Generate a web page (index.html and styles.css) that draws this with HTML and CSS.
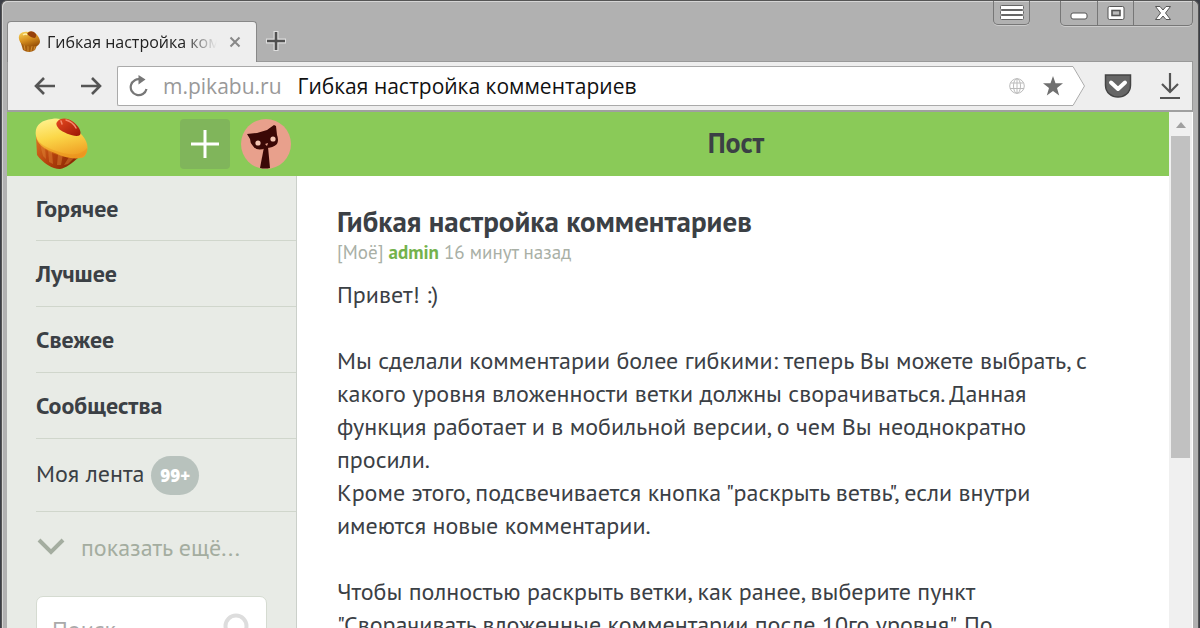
FILE: index.html
```
<!DOCTYPE html>
<html lang="ru">
<head>
<meta charset="utf-8">
<meta name="viewport" content="width=device-width, initial-scale=1">
<title>Гибкая настройка комментариев</title>
<link rel="stylesheet" href="styles.css">
</head>
<body>
<svg class="defs" aria-hidden="true">
  <defs>
    <linearGradient id="cake" x1="0.3" y1="0" x2="0.6" y2="1"><stop offset="0" stop-color="#fff08a"/><stop offset="0.45" stop-color="#fbd748"/><stop offset="1" stop-color="#ef9d22"/></linearGradient>
    <linearGradient id="cup" x1="0" y1="0" x2="1" y2="0.5"><stop offset="0" stop-color="#dd7420"/><stop offset="0.5" stop-color="#b8440e"/><stop offset="1" stop-color="#8e2b05"/></linearGradient>
    <linearGradient id="jam" x1="0" y1="0" x2="1" y2="1"><stop offset="0" stop-color="#e84a20"/><stop offset="1" stop-color="#9c1606"/></linearGradient>
    <linearGradient id="crust" x1="0.2" y1="0" x2="0.7" y2="1"><stop offset="0" stop-color="#f5cf55"/><stop offset="0.5" stop-color="#d99220"/><stop offset="1" stop-color="#9a5206"/></linearGradient>
  </defs>
</svg>
<div class="window">
  <div class="chrome">
    <div class="tabs">
      <div class="tab">
        <svg class="favicon" width="24" height="24" viewBox="0 0 24 24" aria-hidden="true">
          <path d="M2 10L5 20Q11 24 17 20L20 13Z" fill="#a65d0d"/>
          <path d="M6 14l1 6M10 15v7M14 16l-1 5M17 16l-1 4" stroke="#d09030" stroke-width="1"/>
          <path d="M1 9C0 4 4 1 10 2C15 0 21 5 22 11C22 15 19 17 15 16C9 17 2 15 1 9Z" fill="url(#crust)"/>
          <path d="M9 4Q11 0 16 2Q20 5 17 8Q13 8 9 4Z" fill="#97410b"/>
          <path d="M5 5q3-2 4 0" fill="none" stroke="#fff0a8" stroke-width="1.5"/>
        </svg>
        <span class="tab-title">Гибкая настройка комментариев</span>
        <button class="plain" aria-label="Закрыть вкладку"><svg width="12" height="12" viewBox="0 0 12 12"><path d="M1.5 1.5l9 9M10.500 1.500l-9 9" stroke="#888" stroke-width="2"/></svg></button>
      </div>
      <button class="plain new-tab" aria-label="Новая вкладка"><svg width="20" height="20" viewBox="0 0 20 20"><path d="M10 0v20M0 10h20" stroke="#ddd" stroke-width="5"/><path d="M10 1v18M1 10h18" stroke="#505050" stroke-width="2.600"/></svg></button>
      <div class="window-buttons">
        <button class="win menu" aria-label="Меню"><svg width="24" height="15" viewBox="0 0 24 15"><g fill="#fff" stroke="#666"><rect x=".5" y=".5" width="23" height="4" rx="1"/><rect x=".5" y="5.500" width="23" height="4" rx="1"/><rect x=".5" y="10.500" width="23" height="4" rx="1"/></g></svg></button>
        <div class="win-group">
          <button class="win" aria-label="Свернуть"><svg width="18" height="16" viewBox="0 0 18 16"><rect x="1" y="8" width="16" height="6" rx="2" fill="#fff" stroke="#555"/></svg></button>
          <button class="win" aria-label="Развернуть"><svg width="18" height="16" viewBox="0 0 18 16"><rect x="1" y="1.500" width="16" height="13" rx="1.500" fill="#fff" stroke="#555"/><rect x="5" y="5.500" width="8" height="5" fill="#bbb" stroke="#555" stroke-width="1.600"/></svg></button>
          <button class="win wide" aria-label="Закрыть"><svg width="18" height="16" viewBox="0 0 18 16"><path d="M1.500 1.500H6L9 5l3-3.500h4.500L11.500 8l5 6.500H12L9 11l-3 3.500H1.500l5-6.500z" fill="#fff" stroke="#555"/></svg></button>
        </div>
      </div>
    </div>
    <div class="toolbar">
      <button class="plain nav" aria-label="Назад"><svg width="22" height="20" viewBox="0 0 22 20"><path d="M21 10H2M10 2L2 10l8 8" fill="none" stroke="#555" stroke-width="2.600"/></svg></button>
      <button class="plain nav" aria-label="Вперёд"><svg width="22" height="20" viewBox="0 0 22 20"><path d="M1 10h19M12 2l8 8-8 8" fill="none" stroke="#555" stroke-width="2.600"/></svg></button>
      <div class="address">
        <svg class="address-shape" aria-hidden="true" width="12" height="40" viewBox="0 0 12 40"><path d="M0 0L12 20L0 40Z" fill="#fff"/><path d="M0 .5L11.500 20L0 39.500" fill="none" stroke="#aaa"/></svg>
        <button class="plain" aria-label="Обновить"><svg width="20" height="22" viewBox="0 0 20 22"><path d="M12 4.500A8 8 0 1 0 17.500 14" fill="none" stroke="#777" stroke-width="2.200"/><path d="M9.500 0l7 4.500-7 5z" fill="#777"/></svg></button>
        <span class="host">m.pikabu.ru</span>
        <span class="page-title">Гибкая настройка комментариев</span>
        <svg width="16" height="16" viewBox="0 0 16 16" aria-hidden="true"><g fill="none" stroke="#bbb"><circle cx="8" cy="8" r="7.300"/><ellipse cx="8" cy="8" rx="3.500" ry="7.300"/><path d="M8 1v14M1.500 5h13M1 10.500h14"/></g></svg>
        <button class="plain star" aria-label="В закладки"><svg width="20" height="20" viewBox="0 0 20 20"><path d="M10 0l2.500 7.300H20l-6 4.700 2.200 7.500L10 15l-6.200 4.500L6 12 0 7.300h7.500z" fill="#707070"/></svg></button>
      </div>
      <button class="plain pocket" aria-label="Pocket"><svg width="28" height="24" viewBox="0 0 28 24"><path d="M1.500 1h25v10c0 16-25 16-25 0z" fill="#666" stroke="#444" stroke-width="1.500"/><path d="M7 8.500l7 6.500 7-6.500" fill="none" stroke="#fff" stroke-width="4" stroke-linecap="round" stroke-linejoin="round"/></svg></button>
      <button class="plain" aria-label="Загрузки"><svg width="20" height="26" viewBox="0 0 20 26"><path d="M10 0v19M2 11l8 8 8-8M0 25h20" fill="none" stroke="#555" stroke-width="2.200"/></svg></button>
    </div>
  </div>
  <div class="viewport">
    <div class="page">
      <header class="header">
        <div class="header-side">
          <a class="logo" href="#" aria-label="Главная"><svg width="54" height="52" viewBox="0 0 54 52">
            <path d="M1 18L2 37C8 45 17 51 25 51C31 50 37 45 43 40L42 34Z" fill="url(#cup)"/>
            <path d="M5 26l3 12 3 3-1-12zM13 31l1 13 4 2-1-12zM23 36l-1 11h4l2-11zM34 39l-5 8 4-1 6-6z" fill="#e28a38" opacity=".45"/>
            <path d="M1 18C-1 8 6 2 17 1C30-2 39 9 47 17C54 25 54 33 49 39C42 42 30 40 20 35C9 31 2 26 1 18Z" fill="url(#cake)"/>
            <path d="M1 19C4 27 14 31 28 35C39 38 47 36 52 30C53 36 47 41 38 40C22 39 3 31 1 19Z" fill="#e88b1b" opacity=".4"/>
            <path d="M22 4C25-1 33 0 37 3C43 7 47 13 45 17C41 20 29 15 24 11Q20 7 22 4Z" fill="url(#jam)"/>
            <path d="M26 3l1 3M31 2q7 2 10 8" stroke="#f58b6c" stroke-width="1.500" fill="none" stroke-linecap="round"/>
          </svg></a>
          <button class="add" aria-label="Добавить пост"><svg width="30" height="30" viewBox="0 0 30 30"><path d="M15 1v28M1 15h28" stroke="#fff" stroke-width="3"/></svg></button>
          <a class="avatar" href="#" aria-label="Профиль"><svg width="50" height="50" viewBox="0 0 50 50">
            <circle cx="25" cy="25" r="25" fill="#e8a08c"/>
            <path d="M6 15L16 14L26 11L33 6L35 7L36 16Q38 21 36 25Q32 29 25 29Q16 33 12 27Q9 24 9 20Z" fill="#3b0806"/>
            <path d="M23 28h4l2 21q-5 1-10 0z" fill="#3b0806"/>
            <circle cx="17" cy="24" r="2.600" fill="#f3c4b2"/><circle cx="32" cy="20" r="2.600" fill="#f3c4b2"/><path d="M24 25l3-1-1 3z" fill="#e8a08c"/>
          </svg></a>
        </div>
        <div class="header-title">Пост</div>
      </header>
      <div class="columns">
        <aside class="sidebar">
          <nav class="menu-list">
            <a class="item" href="#">Горячее</a>
            <a class="item" href="#">Лучшее</a>
            <a class="item" href="#">Свежее</a>
            <a class="item" href="#">Сообщества</a>
            <a class="item feed" href="#"><span class="feed-label">Моя лента</span><span class="badge">99+</span></a>
            <button class="plain more"><svg width="30" height="18" viewBox="0 0 30 18" aria-hidden="true"><path d="M3 2l12 12L27 2" fill="none" stroke="#a4ada0" stroke-width="4"/></svg>показать ещё...</button>
          </nav>
          <div class="search">
            <input type="text" placeholder="Поиск" aria-label="Поиск">
            <svg width="32" height="32" viewBox="0 0 32 32" aria-hidden="true"><circle cx="17" cy="13" r="10.500" fill="none" stroke="#ddd" stroke-width="4"/><path d="M9 21l-7 8" stroke="#ddd" stroke-width="4"/></svg>
          </div>
        </aside>
        <main class="post">
          <h1>Гибкая настройка комментариев</h1>
          <div class="meta">[Моё] <a href="#">admin</a> 16 минут назад</div>
          <div class="text">
            <p>Привет! :)</p>
            <p>Мы сделали комментарии более гибкими: теперь Вы можете выбрать, с<br>какого уровня вложенности ветки должны сворачиваться. Данная<br>функция работает и в мобильной версии, о чем Вы неоднократно<br>просили.<br>Кроме этого, подсвечивается кнопка "раскрыть ветвь", если внутри<br>имеются новые комментарии.</p>
            <p>Чтобы полностью раскрыть ветки, как ранее, выберите пункт<br>"Сворачивать вложенные комментарии после 10го уровня". По</p>
          </div>
        </main>
      </div>
    </div>
    <div class="scrollbar" aria-hidden="true">
      <svg width="10" height="6" viewBox="0 0 10 6"><path d="M0 6L5 0l5 6z" fill="#a0a0a0"/></svg>
      <div class="thumb"></div>
    </div>
  </div>
</div>
</body>
</html>
```
FILE: styles.css
```
* {
  box-sizing: border-box;
}

body {
  margin: 0;
  background: #3b3e46;
  color: #3b4045;
  font-family: "PT Sans", "Noto Sans", sans-serif;
}

a {
  color: inherit;
  text-decoration: none;
}

.defs {
  position: absolute;
  width: 0;
  height: 0;
}

.window {
  display: flex;
  flex-direction: column;
  height: 100vh;
  overflow: hidden;
  margin: 0 1px;
  padding: 0 5px;
  border: 1px solid #555;
  border-bottom: 0;
  border-radius: 6px 6px 0 0;
  background: #b1b1b1;
  box-shadow: inset 1px 1px #d5d5d5;
}

.plain {
  display: flex;
  align-items: center;
  flex: none;
  padding: 0;
  border: 0;
  background: none;
  font: inherit;
}

.chrome {
  flex: none;
  font-family: "Segoe UI", "Open Sans", sans-serif;
}

.tabs {
  display: flex;
  align-items: flex-start;
  height: 60px;
}

.tab {
  display: flex;
  align-items: center;
  z-index: 1;
  gap: 5px;
  width: 250px;
  height: 41px;
  margin-top: 20px;
  padding: 0 15px 0 10px;
  border: 1px solid #888;
  border-bottom: 0;
  border-radius: 4px 4px 0 0;
  background: #eee;
}

.favicon {
  flex: none;
}

.tab-title {
  flex: 1;
  overflow: hidden;
  margin-right: 7px;
  color: #222;
  font-size: 16px;
  white-space: nowrap;
  mask-image: linear-gradient(to right, #000 80%, transparent);
}

.new-tab {
  margin: 30px 0 0 9px;
}

.window-buttons {
  display: flex;
  gap: 30px;
  margin-left: auto;
}

.win {
  display: flex;
  align-items: center;
  justify-content: center;
  width: 36px;
  height: 24px;
  padding: 0;
  border: 0;
  background: none;
}

.win + .win {
  border-left: 1px solid #777;
}

.win.wide {
  width: 59px;
}

.win.menu,
.win-group {
  border: 1px solid #777;
  border-top: 0;
  border-radius: 0 0 5px 5px;
  box-shadow: 0 1px #ccc;
}

.win.menu {
  width: 37px;
}

.win-group {
  display: flex;
}

.toolbar {
  display: flex;
  align-items: center;
  height: 51px;
  padding: 0 12px 0 26px;
  border: 1px solid #999;
  border-bottom: 2px solid #a0a0a0;
  background: #eee;
}

.nav {
  margin-right: 24px;
}

.nav + .nav {
  margin-right: 15px;
}

.address {
  display: flex;
  align-items: center;
  flex: 1;
  gap: 14px;
  min-width: 0;
  height: 40px;
  margin-right: 31px;
  padding: 0 10px 0 11px;
  border: 1px solid #aaa;
  border-right: 0;
  border-radius: 2px 0 0 2px;
  background: #fff;
  font-size: 21px;
  white-space: nowrap;
  position: relative;
}

.address-shape {
  position: absolute;
  top: -1px;
  right: -12px;
}

.host {
  margin-right: 2px;
  color: #999;
}

.page-title {
  flex: 1;
  color: #111;
}

.star {
  margin-left: 4px;
}

.pocket {
  margin-right: 28px;
}

.viewport {
  display: flex;
  flex: 1;
  min-height: 0;
}

.page {
  display: flex;
  flex: 1;
  flex-direction: column;
  min-width: 0;
  overflow: hidden;
  background: #fff;
}

.header {
  display: flex;
  align-items: center;
  flex: none;
  height: 64px;
  background: #8aca58;
}

.header-side {
  display: flex;
  align-items: center;
  flex: none;
  width: 290px;
  padding: 0 6px 0 28px;
}

.logo,
.avatar,
.add {
  display: flex;
}

.add {
  align-items: center;
  justify-content: center;
  width: 50px;
  height: 50px;
  margin: 0 11px 0 auto;
  padding: 0;
  border: 0;
  border-radius: 4px;
  background: #80b55b;
}

.header-title {
  flex: 1;
  padding: 0 0 3px 6px;
  text-align: center;
  font-size: 28px;
  font-weight: 700;
}

.columns {
  display: flex;
  flex: 1;
  min-height: 0;
}

.sidebar {
  flex: none;
  width: 290px;
  padding-left: 29px;
  border-right: 1px solid #cbd0ca;
  background: #e8ebe6;
}

.item {
  display: flex;
  align-items: center;
  height: 66px;
  border-bottom: 1px solid #d0d6cc;
  font-size: 24px;
  font-weight: 700;
}

.item:first-child {
  height: 65px;
}

.feed {
  gap: 7px;
  height: 73px;
  font-weight: 400;
}

.feed-label {
  padding-bottom: 4px;
}

.badge {
  padding: 0 9px;
  border-radius: 20px;
  background: #b8c2bd;
  color: #fff;
  font-family: "Noto Sans", sans-serif;
  font-size: 17px;
  font-weight: 900;
  line-height: 39px;
}

.more {
  gap: 15px;
  height: 70px;
  color: #a4ada0;
  font-size: 24px;
}

.search {
  display: flex;
  align-items: center;
  height: 66px;
  margin: 14px 29px 0 0;
  padding: 0 15px;
  border: 1px solid #d5dbd1;
  border-radius: 7px;
  background: #fff;
}

.search input {
  flex: 1;
  min-width: 0;
  padding: 0;
  border: 0;
  outline: 0;
  background: none;
  font: inherit;
  font-size: 24px;
}

.search input::placeholder {
  color: #aaa;
}

.post {
  flex: 1;
  min-width: 0;
  padding: 27px 40px 0;
}

h1 {
  margin: 0;
  font-size: 29px;
  line-height: 36px;
}

.meta {
  color: #a9b0a6;
  font-size: 19px;
  line-height: 26px;
}

.meta a {
  color: #74b24c;
  font-weight: 700;
}

.text {
  padding-top: 13px;
  font-size: 24px;
  line-height: 33px;
  white-space: nowrap;
}

.text p {
  margin: 0 0 33px;
}

.scrollbar {
  display: flex;
  align-items: center;
  flex: none;
  flex-direction: column;
  gap: 8px;
  width: 24px;
  padding: 10px 2px;
  border-right: 1px solid #fff;
  background: #f0f0f0;
}

.thumb {
  width: 100%;
  height: 322px;
  background: #c1c1c1;
}
```
